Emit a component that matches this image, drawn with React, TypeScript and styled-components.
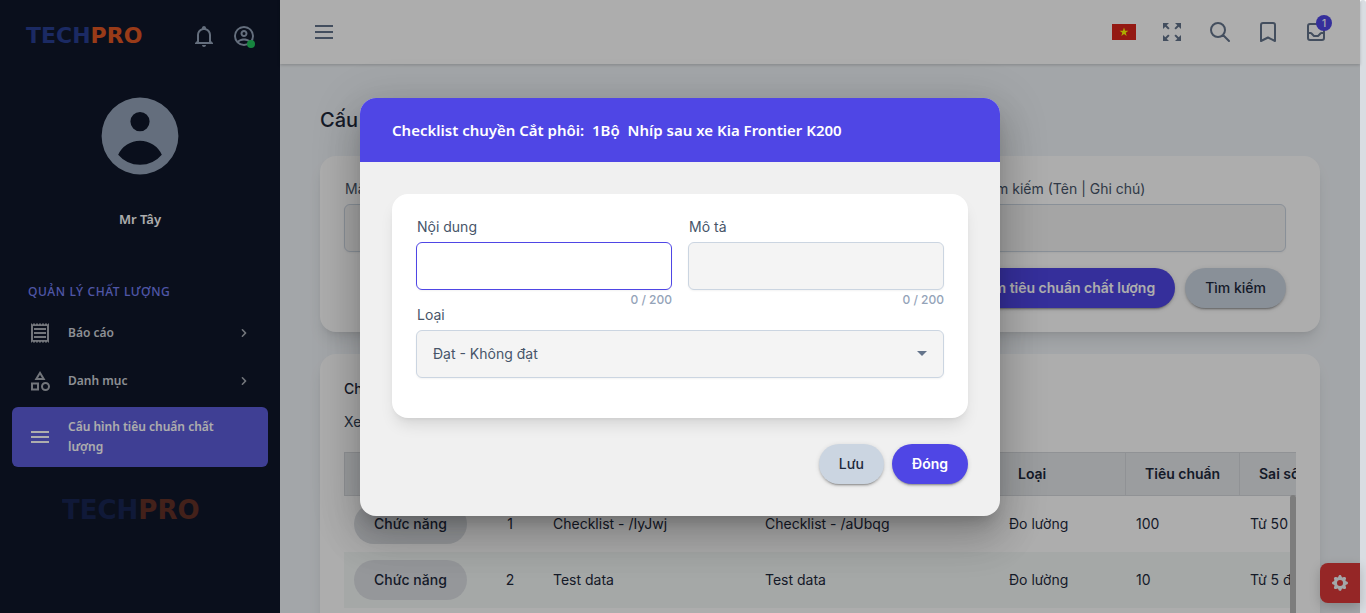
import React from "react";
import styled, { createGlobalStyle, css } from "styled-components";
import { HiChevronRight, HiCog, HiOutlineBookmark, HiOutlineInbox, HiOutlineSearch } from "react-icons/hi";
import { MdMenu, MdOutlineCategory, MdOutlineReceipt, MdZoomOutMap } from "react-icons/md";

const GlobalStyle = createGlobalStyle`
  *, *::before, *::after { box-sizing: border-box; }
  body {
    margin: 0;
    font-family: Inter, "Noto Sans", sans-serif;
    font-size: 14px;
    line-height: 20px;
    color: #1e293b;
  }
  h1, h2, p { margin: 0; }
  button, input, select { font: inherit; color: inherit; }
  button { cursor: pointer; }
`;

const systemFont = `"Noto Sans", "Open Sans", sans-serif`;

const Window = styled.div`
  display: flex;
  height: 100vh;
  overflow: hidden;
`;

const Shell = styled.div`
  position: relative;
  display: flex;
  flex: 1;
  min-width: 0;
  background: #f1f5f9;
`;

const PageScrollbar = styled.div`
  width: 6px;
  border-radius: 3px 3px 0 0;
  background: #d9dde2;
`;

/* Sidebar */

const Sidebar = styled.aside`
  display: flex;
  flex-direction: column;
  flex: none;
  width: 280px;
  background: #0f172a;
  color: #fff;
  font-family: ${systemFont};
`;

const SidebarTop = styled.div`
  display: flex;
  align-items: center;
  height: 72px;
  padding: 0 16px 0 26px;
`;

const Logo = styled.span<{ $size: number }>`
  font-family: "DejaVu Sans", sans-serif;
  font-weight: 700;
  font-size: ${(p) => p.$size}px;
  line-height: 32px;
  color: #283e92;
`;

const LogoAccent = styled.span`
  color: #e25824;
`;

const SidebarActions = styled.div`
  display: flex;
  margin-left: auto;
`;

const IconButton = styled.button`
  position: relative;
  display: flex;
  align-items: center;
  justify-content: center;
  width: 40px;
  height: 40px;
  padding: 0;
  border: 0;
  background: none;
  color: #94a3b8;
`;

const OnlineDot = styled.span`
  position: absolute;
  right: 9px;
  bottom: 8px;
  width: 8px;
  height: 8px;
  border-radius: 50%;
  background: #22c55e;
`;

const Profile = styled.div`
  display: flex;
  flex-direction: column;
  align-items: center;
  gap: 24px;
  padding-top: 16px;
  color: #94a3b8;
`;

const ProfileName = styled.p`
  font-size: 13px;
  font-weight: 600;
  line-height: 22px;
  color: #fff;
`;

const NavGroup = styled.h2`
  margin: 52px 28px 9px;
  font-size: 12px;
  font-weight: 500;
  line-height: 20px;
  letter-spacing: 0.05em;
  text-transform: uppercase;
  color: #7780f5;
`;

const Nav = styled.nav`
  display: flex;
  flex-direction: column;
  gap: 4px;
  padding: 0 12px;
`;

const NavItem = styled.a<{ $active?: boolean }>`
  display: flex;
  align-items: center;
  gap: 16px;
  padding: 10px 16px;
  border-radius: 6px;
  font-size: 12px;
  font-weight: 600;
  line-height: 20px;
  text-decoration: none;
  color: ${(p) => (p.$active ? "#fff" : "#cfd3da")};
  background: ${(p) => (p.$active ? "#5d5ddb" : "transparent")};

  svg { flex: none; color: ${(p) => (p.$active ? "#fff" : "#a9adb5")}; }
`;

const NavLabel = styled.span`
  flex: 1;
  padding-right: 24px;
`;

const SidebarFooter = styled.div`
  padding: 27px 62px;
  opacity: 0.4;
`;

/* Header */

const Main = styled.div`
  display: flex;
  flex-direction: column;
  flex: 1;
  min-width: 0;
`;

const Header = styled.header`
  display: flex;
  align-items: center;
  justify-content: space-between;
  flex: none;
  height: 64px;
  padding: 0 24px;
  background: #fff;
  box-shadow: 0 1px 3px rgba(0, 0, 0, 0.2);

  button { color: #64748b; }
`;

const HeaderTools = styled.div`
  display: flex;
  gap: 8px;
`;

const Badge = styled.span`
  position: absolute;
  top: 3px;
  right: 4px;
  width: 16px;
  height: 16px;
  border-radius: 50%;
  background: #4f46e5;
  color: #fff;
  font-size: 10px;
  font-weight: 500;
  line-height: 16px;
  text-align: center;
`;

/* Page content */

const Content = styled.main`
  flex: 1;
  min-height: 0;
  padding: 40px;
  overflow: hidden;
`;

const PageTitle = styled.h1`
  margin-bottom: 20px;
  font-size: 20px;
  font-weight: 500;
  line-height: 32px;
`;

const Card = styled.section`
  padding: 24px;
  border-radius: 16px;
  background: #fff;
  box-shadow: 0 10px 15px -3px rgba(0, 0, 0, 0.1), 0 4px 6px -4px rgba(0, 0, 0, 0.1);

  & + & { margin-top: 22px; }
`;

const FieldRow = styled.div<{ $columns: number }>`
  display: grid;
  grid-template-columns: repeat(${(p) => p.$columns}, minmax(0, 1fr));
  gap: 16px;
`;

const SearchForm = styled.form`
  display: flex;
  flex-direction: column;
  gap: 16px;
  padding-right: 10px;
`;

const Field = styled.div`
  display: flex;
  flex-direction: column;
`;

const FieldLabel = styled.label`
  margin-bottom: 6px;
  padding-left: 1px;
  font-size: 14px;
  line-height: 18px;
  color: #475569;
`;

const controlBox = css`
  width: 100%;
  height: 48px;
  padding: 0 16px;
  border: 1px solid #cbd5e1;
  border-radius: 6px;
  background: #f4f4f4;
  outline: none;
  box-shadow: 0 1px 2px rgba(0, 0, 0, 0.05);
`;

const TextInput = styled.input<{ $active?: boolean }>`
  ${controlBox}
  ${(p) => p.$active && "border-color: #4f46e5; background: #fff;"}
`;

const SelectBox = styled.div`
  position: relative;
`;

const Select = styled.select`
  ${controlBox}
  appearance: none;
  color: #475569;
`;

const SelectArrow = styled.svg`
  position: absolute;
  top: 21px;
  right: 17px;
  fill: #64748b;
  pointer-events: none;
`;

const Counter = styled.span`
  margin-top: 4px;
  font-size: 12px;
  font-weight: 500;
  line-height: 12px;
  text-align: right;
  color: #94a3b8;
`;

const Actions = styled.div<{ $gap: number }>`
  display: flex;
  justify-content: flex-end;
  gap: ${(p) => p.$gap}px;
`;

const PillButton = styled.button<{ $tone: "primary" | "accent" | "flat" }>`
  height: 40px;
  padding: 0 20px;
  border: 0;
  border-radius: 20px;
  font-weight: ${(p) => (p.$tone === "primary" ? 600 : 500)};
  white-space: nowrap;
  color: ${(p) => (p.$tone === "primary" ? "#fff" : "#1e293b")};
  background: ${(p) => ({ primary: "#4f46e5", accent: "#cbd5e1", flat: "#dcdfe4" })[p.$tone]};
  box-shadow: ${(p) =>
    p.$tone === "flat" ? "none" : "0 3px 1px -2px rgba(0,0,0,.2), 0 2px 2px 0 rgba(0,0,0,.14), 0 1px 5px 0 rgba(0,0,0,.12)"};
`;

const ListTitle = styled.h2`
  font-size: 14px;
  font-weight: 500;
  line-height: 22px;
`;

const ListHint = styled.p`
  margin: 12px 0 20px;
  color: #334155;
`;

const TableFrame = styled.div`
  position: relative;
  overflow: hidden;
`;

const TableScrollbar = styled.div`
  position: absolute;
  top: 43px;
  right: 0;
  bottom: 0;
  width: 6px;
  border-radius: 3px;
  background: #b8b8b8;
`;

const Table = styled.table`
  width: 1056px;
  table-layout: fixed;
  border-collapse: separate;
  border-spacing: 0;
  white-space: nowrap;
`;

const Th = styled.th`
  height: 44px;
  padding: 0 19px;
  border: solid #d5d7dc;
  border-width: 1px 1px 1px 0;
  background: #e5e7eb;
  font-weight: 600;
  text-align: left;

  &:first-child { border-left-width: 1px; }
`;

const Td = styled.td<{ $center?: boolean }>`
  height: 56px;
  padding: 0 10px;
  text-align: ${(p) => (p.$center ? "center" : "left")};

  tr:nth-child(even) > & { background: #f4f8f6; }
`;

const SettingsButton = styled.button`
  position: absolute;
  right: 0;
  bottom: 10px;
  display: flex;
  align-items: center;
  justify-content: center;
  width: 40px;
  height: 40px;
  padding: 0;
  border: 0;
  border-radius: 8px 0 0 8px;
  background: #dc3838;
  color: #f1f5f9;
  box-shadow: 0 4px 12px rgba(0, 0, 0, 0.2);
`;

/* Dialog */

const Backdrop = styled.div`
  position: absolute;
  inset: 0;
  display: grid;
  place-items: center;
  background: rgba(0, 0, 0, 0.32);
`;

const Dialog = styled.div`
  width: 640px;
  max-width: 90%;
  border-radius: 16px;
  overflow: hidden;
  background: #f0f0f0;
  box-shadow: 0 11px 15px -7px rgba(0,0,0,.2), 0 24px 38px 3px rgba(0,0,0,.14), 0 9px 46px 8px rgba(0,0,0,.12);
`;

const DialogTitle = styled.h2`
  padding: 0 32px;
  background: #4f46e5;
  color: #fff;
  font-family: ${systemFont};
  font-size: 15px;
  font-weight: 600;
  line-height: 64px;
  white-space: pre;
`;

const DialogBody = styled.form`
  display: flex;
  flex-direction: column;
  gap: 26px;
  padding: 32px;
`;

const DialogCard = styled(Card)`
  padding-bottom: 40px;
`;

const BellIcon = () => (
  <svg width="24" height="24" viewBox="0 0 24 24" fill="currentColor">
    <path d="M10 21H14C14 22.1 13.1 23 12 23S10 22.1 10 21M21 19V20H3V19L5 17V11C5 7.9 7 5.2 10 4.3V4C10 2.9 10.9 2 12 2S14 2.9 14 4V4.3C17 5.2 19 7.9 19 11V17L21 19M17 11C17 8.2 14.8 6 12 6S7 8.2 7 11V18H17V11Z" />
  </svg>
);

const AccountIcon = () => (
  <svg width="24" height="24" viewBox="0 0 24 24" fill="currentColor">
    <path d="M12,2A10,10 0 0,0 2,12A10,10 0 0,0 12,22A10,10 0 0,0 22,12A10,10 0 0,0 12,2M7.07,18.28C7.5,17.38 10.12,16.5 12,16.5C13.88,16.5 16.5,17.38 16.93,18.28C15.57,19.36 13.86,20 12,20C10.14,20 8.43,19.36 7.07,18.28M18.36,16.83C16.93,15.09 13.46,14.5 12,14.5C10.54,14.5 7.07,15.09 5.64,16.83C4.62,15.5 4,13.82 4,12C4,7.59 7.59,4 12,4C16.41,4 20,7.59 20,12C20,13.82 19.38,15.5 18.36,16.83M12,6C10.06,6 8.5,7.56 8.5,9.5C8.5,11.44 10.06,13 12,13C13.94,13 15.5,11.44 15.5,9.5C15.5,7.56 13.94,6 12,6M12,11A1.5,1.5 0 0,1 10.5,9.5A1.5,1.5 0 0,1 12,8A1.5,1.5 0 0,1 13.5,9.5A1.5,1.5 0 0,1 12,11Z" />
  </svg>
);

const AvatarIcon = () => (
  <svg width="96" height="96" viewBox="0 0 20 20" fill="currentColor">
    <path fillRule="evenodd" clipRule="evenodd" d="M18 10a8 8 0 11-16 0 8 8 0 0116 0zm-6-3a2 2 0 11-4 0 2 2 0 014 0zm-2 4a5 5 0 00-4.546 2.916A5.986 5.986 0 0010 16a5.986 5.986 0 004.546-2.084A5 5 0 0010 11z" />
  </svg>
);

const BarsIcon = () => (
  <svg width="24" height="24" viewBox="0 0 24 24" fill="currentColor">
    <path d="M3 5h18v2H3zM3 11h18v2H3zM3 17h18v2H3z" />
  </svg>
);

const FlagIcon = () => (
  <svg width="24" height="16" viewBox="0 0 24 16">
    <rect width="24" height="16" fill="#da251d" />
    <path d="M12 3.6l1.1 3.2h3.3l-2.7 2 1 3.2-2.7-2-2.7 2 1-3.2-2.7-2h3.3z" fill="#ffff00" />
  </svg>
);

const columns: [string, number][] = [
  ["Chức năng", 133],
  ["STT", 66],
  ["Nội dung", 212],
  ["Mô tả", 244],
  ["Loại", 127],
  ["Tiêu chuẩn", 114],
  ["Sai số", 160],
];

const rows = [
  ["1", "Checklist - /IyJwj", "Checklist - /aUbqg", "Đo lường", "100", "Từ 50 đến 100"],
  ["2", "Test data", "Test data", "Đo lường", "10", "Từ 5 đến 10"],
  ["3", "Test data", "Test data", "Đo lường", "10", "Từ 5 đến 10"],
];

export default function App() {
  return (
    <Window>
      <GlobalStyle />
      <Shell>
        <Sidebar>
          <SidebarTop>
            <Logo $size={22}>TECH<LogoAccent>PRO</LogoAccent></Logo>
            <SidebarActions>
              <IconButton aria-label="Thông báo"><BellIcon /></IconButton>
              <IconButton aria-label="Tài khoản"><AccountIcon /><OnlineDot /></IconButton>
            </SidebarActions>
          </SidebarTop>
          <Profile>
            <AvatarIcon />
            <ProfileName>Mr Tây</ProfileName>
          </Profile>
          <NavGroup>Quản lý chất lượng</NavGroup>
          <Nav>
            <NavItem href="#bao-cao">
              <MdOutlineReceipt size={24} />
              <NavLabel>Báo cáo</NavLabel>
              <HiChevronRight size={16} />
            </NavItem>
            <NavItem href="#danh-muc">
              <MdOutlineCategory size={24} />
              <NavLabel>Danh mục</NavLabel>
              <HiChevronRight size={16} />
            </NavItem>
            <NavItem href="#cau-hinh" $active>
              <MdMenu size={24} />
              <NavLabel>Cấu hình tiêu chuẩn chất lượng</NavLabel>
            </NavItem>
          </Nav>
          <SidebarFooter>
            <Logo $size={26}>TECH<LogoAccent>PRO</LogoAccent></Logo>
          </SidebarFooter>
        </Sidebar>

        <Main>
          <Header>
            <IconButton aria-label="Menu"><BarsIcon /></IconButton>
            <HeaderTools>
              <IconButton aria-label="Ngôn ngữ"><FlagIcon /></IconButton>
              <IconButton aria-label="Toàn màn hình"><MdZoomOutMap size={24} /></IconButton>
              <IconButton aria-label="Tìm"><HiOutlineSearch size={24} /></IconButton>
              <IconButton aria-label="Đánh dấu"><HiOutlineBookmark size={24} /></IconButton>
              <IconButton aria-label="Tin nhắn"><HiOutlineInbox size={24} /><Badge>1</Badge></IconButton>
            </HeaderTools>
          </Header>

          <Content>
            <PageTitle>Cấu hình tiêu chuẩn chất lượng</PageTitle>
            <Card>
              <SearchForm>
                <FieldRow $columns={3}>
                  <Field>
                    <FieldLabel htmlFor="code">Mã</FieldLabel>
                    <TextInput id="code" />
                  </Field>
                  <Field>
                    <FieldLabel htmlFor="name">Tên</FieldLabel>
                    <TextInput id="name" />
                  </Field>
                  <Field>
                    <FieldLabel htmlFor="search">Tìm kiếm (Tên | Ghi chú)</FieldLabel>
                    <TextInput id="search" />
                  </Field>
                </FieldRow>
                <Actions $gap={10}>
                  <PillButton type="button" $tone="primary">Thêm tiêu chuẩn chất lượng</PillButton>
                  <PillButton type="button" $tone="accent">Tìm kiếm</PillButton>
                </Actions>
              </SearchForm>
            </Card>
            <Card>
              <ListTitle>Checklist</ListTitle>
              <ListHint>Xem danh sách</ListHint>
              <TableFrame>
                <Table>
                  <colgroup>
                    {columns.map(([name, width]) => <col key={name} width={width} />)}
                  </colgroup>
                  <thead>
                    <tr>{columns.map(([name]) => <Th key={name}>{name}</Th>)}</tr>
                  </thead>
                  <tbody>
                    {rows.map(([index, ...cells]) => (
                      <tr key={index}>
                        <Td><PillButton type="button" $tone="flat">Chức năng</PillButton></Td>
                        <Td $center>{index}</Td>
                        {cells.map((cell, i) => <Td key={i}>{cell}</Td>)}
                      </tr>
                    ))}
                  </tbody>
                </Table>
                <TableScrollbar />
              </TableFrame>
            </Card>
          </Content>
        </Main>

        <SettingsButton aria-label="Cài đặt"><HiCog size={20} /></SettingsButton>

        <Backdrop>
          <Dialog role="dialog" aria-modal="true" aria-labelledby="dialog-title">
            <DialogTitle id="dialog-title">{"Checklist chuyền Cắt phôi:  1Bộ  Nhíp sau xe Kia Frontier K200"}</DialogTitle>
            <DialogBody>
              <DialogCard>
                <FieldRow $columns={2}>
                  <Field>
                    <FieldLabel htmlFor="content">Nội dung</FieldLabel>
                    <TextInput id="content" maxLength={200} $active />
                    <Counter>0 / 200</Counter>
                  </Field>
                  <Field>
                    <FieldLabel htmlFor="description">Mô tả</FieldLabel>
                    <TextInput id="description" maxLength={200} />
                    <Counter>0 / 200</Counter>
                  </Field>
                </FieldRow>
                <Field>
                  <FieldLabel htmlFor="kind">Loại</FieldLabel>
                  <SelectBox>
                    <Select id="kind" defaultValue="pass">
                      <option value="pass">Đạt - Không đạt</option>
                      <option value="measure">Đo lường</option>
                    </Select>
                    <SelectArrow width="10" height="5" viewBox="0 0 10 5"><path d="M0 0h10L5 5z" /></SelectArrow>
                  </SelectBox>
                </Field>
              </DialogCard>
              <Actions $gap={8}>
                <PillButton type="button" $tone="accent">Lưu</PillButton>
                <PillButton type="button" $tone="primary">Đóng</PillButton>
              </Actions>
            </DialogBody>
          </Dialog>
        </Backdrop>
      </Shell>
      <PageScrollbar />
    </Window>
  );
}
